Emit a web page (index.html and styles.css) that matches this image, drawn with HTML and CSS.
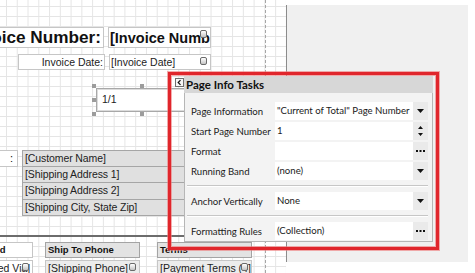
FILE: index.html
```html
<!DOCTYPE html>
<html lang="en">
<head>
    <meta charset="UTF-8">
    <title>Report Designer - Page Info Tasks</title>
    <link rel="stylesheet" href="styles.css">
</head>
<body>
    <div class="workspace">
        <div class="surface">
            <div class="margin-line"></div>

            <div class="ctl title-label">Invoice Number:</div>
            <div class="ctl title-field">[Invoice Number]<span class="tag"></span></div>
            <div class="ctl date-label">Invoice Date:</div>
            <div class="ctl date-field">[Invoice Date]<span class="tag"></span></div>

            <div class="page-info">
                <div class="page-box">1/1</div>
                <span class="grip g-tl"></span>
                <span class="grip g-tc"></span>
                <span class="grip g-tr"></span>
                <span class="grip g-ml"></span>
                <span class="grip g-mr"></span>
                <span class="grip g-bl"></span>
                <span class="grip g-bc"></span>
                <span class="grip g-br"></span>
            </div>

            <div class="ctl ship-label">:</div>
            <div class="address">
                <div class="address-row">[Customer Name]</div>
                <div class="address-row">[Shipping Address 1]</div>
                <div class="address-row">[Shipping Address 2]</div>
                <div class="address-row">[Shipping City, State Zip]</div>
            </div>

            <div class="band-line"></div>

            <div class="ctl head head-shipped">Shipped</div>
            <div class="ctl head head-phone">Ship To Phone</div>
            <div class="ctl head head-terms">Terms</div>

            <div class="ctl cell cell-shipped">[Shipped Via]<span class="tag"></span></div>
            <div class="ctl cell cell-phone">[Shipping Phone]<span class="tag"></span></div>
            <div class="ctl cell cell-terms">[Payment Terms (4]<span class="tag"></span></div>
        </div>
        <div class="side"></div>
    </div>

    <div class="highlight"></div>
    <div class="collapse-btn">
        <svg width="7" height="7" viewBox="0 0 7 7"><path d="M4.5 1.2L2.2 3.5l2.3 2.3" fill="none" stroke="#111" stroke-width="1.2"/></svg>
    </div>

    <div class="tasks">
        <div class="tasks-head">Page Info Tasks</div>
        <div class="tasks-body">
            <div class="task-group">
                <div class="task-row">
                    <span class="task-label">Page Information</span>
                    <span class="task-value">"Current of Total" Page Number</span>
                    <span class="task-btn"><svg width="7" height="4" viewBox="0 0 7 4"><path d="M0 0h7L3.5 4z"/></svg></span>
                </div>
                <div class="task-row">
                    <span class="task-label">Start Page Number</span>
                    <span class="task-value">1</span>
                    <span class="task-btn"><svg width="5" height="10" viewBox="0 0 5 10"><path d="M2.5 0L5 3H0z M0 7h5L2.5 10z"/></svg></span>
                </div>
                <div class="task-row">
                    <span class="task-label">Format</span>
                    <span class="task-value"></span>
                    <span class="task-btn"><svg width="9" height="2" viewBox="0 0 9 2"><rect x="0" width="2" height="2"/><rect x="3.5" width="2" height="2"/><rect x="7" width="2" height="2"/></svg></span>
                </div>
                <div class="task-row">
                    <span class="task-label">Running Band</span>
                    <span class="task-value">(none)</span>
                    <span class="task-btn"><svg width="7" height="4" viewBox="0 0 7 4"><path d="M0 0h7L3.5 4z"/></svg></span>
                </div>
            </div>
            <div class="task-divider"></div>
            <div class="task-group">
                <div class="task-row">
                    <span class="task-label">Anchor Vertically</span>
                    <span class="task-value">None</span>
                    <span class="task-btn"><svg width="7" height="4" viewBox="0 0 7 4"><path d="M0 0h7L3.5 4z"/></svg></span>
                </div>
            </div>
            <div class="task-divider"></div>
            <div class="task-group">
                <div class="task-row">
                    <span class="task-label">Formatting Rules</span>
                    <span class="task-value">(Collection)</span>
                    <span class="task-btn"><svg width="9" height="2" viewBox="0 0 9 2"><rect x="0" width="2" height="2"/><rect x="3.5" width="2" height="2"/><rect x="7" width="2" height="2"/></svg></span>
                </div>
            </div>
        </div>
    </div>
</body>
</html>
```

FILE: styles.css
```css
body {
    margin: 0;
    position: relative;
    width: 475px;
    height: 273px;
    overflow: hidden;
    background-color: #fff;
    font-family: "Liberation Sans", Arial, sans-serif;
}
.workspace {
    display: flex;
    height: 273px;
}
.surface {
    position: relative;
    flex: none;
    width: 286px;
    overflow: hidden;
    background-color: #fff;
    background-image:
        linear-gradient(to right, #e5e5e5 1px, transparent 1px),
        linear-gradient(to bottom, #e5e5e5 1px, transparent 1px);
    background-size: 10.78px 10px;
    background-position: 6px 6px;
}
.side {
    width: 181px;
    height: 257px;
    margin-top: 5px;
    background-color: #f0f0f0;
    border-left: 1px solid #8c8c8c;
}
.margin-line {
    position: absolute;
    left: 265px;
    top: 0;
    bottom: 0;
    border-left: 1px dashed #a6a6a6;
}

/* report controls on the design surface */
.ctl {
    position: absolute;
    box-sizing: border-box;
    border: 1px solid #c6c6c6;
    background-color: #fff;
    white-space: nowrap;
    overflow: hidden;
    color: #111;
}
.tag {
    position: absolute;
    right: 3px;
    top: 2px;
    width: 5px;
    height: 6px;
    border: 1px solid #6a6a6a;
    border-radius: 2px;
    background: linear-gradient(#fff, #c4c4c4);
}
.title-label {
    left: -60px;
    top: 27px;
    width: 164px;
    height: 21px;
    padding-right: 2px;
    font-size: 17.2px;
    font-weight: bold;
    line-height: 19px;
    text-align: right;
}
.title-field {
    left: 108px;
    top: 27px;
    width: 103px;
    height: 21px;
    padding-left: 1px;
    font-size: 14.5px;
    font-weight: bold;
    line-height: 21px;
}
.date-label {
    left: 18px;
    top: 54px;
    width: 87px;
    height: 16px;
    padding-right: 1px;
    font-size: 10.5px;
    line-height: 14px;
    text-align: right;
    color: #222;
}
.date-field {
    left: 109px;
    top: 54px;
    width: 102px;
    height: 16px;
    padding-left: 1px;
    font-size: 10.5px;
    line-height: 14px;
    color: #222;
}
.page-info {
    position: absolute;
    left: 94px;
    top: 86px;
    width: 96px;
    height: 28px;
}
.page-box {
    box-sizing: border-box;
    height: 24px;
    margin: 2px 0 0 2px;
    padding: 4px 0 0 5px;
    border: 1px solid #a8a8a8;
    box-shadow: inset 0 0 0 1px #dcdcdc;
    background-color: #fff;
    font-size: 10.5px;
    color: #222;
}
.grip {
    position: absolute;
    width: 4px;
    height: 4px;
    background-color: #9c9c9c;
}
.g-tl { left: -2px; top: -2px; }
.g-tc { left: 46px; top: -2px; }
.g-tr { left: 94px; top: -2px; }
.g-ml { left: -2px; top: 12px; }
.g-mr { left: 94px; top: 12px; }
.g-bl { left: -2px; top: 26px; }
.g-bc { left: 46px; top: 26px; }
.g-br { left: 94px; top: 26px; }
.ship-label {
    left: -40px;
    top: 150px;
    width: 58px;
    height: 17px;
    padding-right: 4px;
    font-size: 11px;
    line-height: 15px;
    text-align: right;
}
.address {
    position: absolute;
    left: 22px;
    top: 150px;
    width: 240px;
}
.address-row {
    box-sizing: border-box;
    height: 16.5px;
    padding-left: 2px;
    border: 1px solid #a6a6a6;
    border-top: none;
    background-color: #e0e0e0;
    font-size: 10.5px;
    line-height: 15px;
    letter-spacing: -0.1px;
    color: #222;
    white-space: nowrap;
}
.address-row:first-child {
    border-top: 1px solid #a6a6a6;
}
.band-line {
    position: absolute;
    left: 0;
    right: 0;
    top: 235px;
    height: 2px;
    background-color: #6c6c6c;
}
.head {
    top: 242px;
    height: 16px;
    padding-left: 2px;
    font-size: 9.5px;
    font-weight: bold;
    line-height: 14px;
}
.head-shipped { left: -35px; width: 68px; }
.head-phone { left: 45px; width: 95px; background-color: #e3e3e3; border-color: #a4a4a4; }
.head-terms { left: 157px; width: 95px; background-color: #e3e3e3; border-color: #a4a4a4; }
.cell {
    top: 260px;
    height: 16px;
    padding-left: 2px;
    font-size: 10.5px;
    line-height: 14px;
    color: #222;
}
.cell-shipped { left: -35px; width: 68px; }
.cell-phone { left: 45px; width: 95px; background-color: #ececec; }
.cell-terms { left: 157px; width: 95px; background-color: #ececec; }

/* smart tag panel */
.highlight {
    position: absolute;
    left: 168px;
    top: 72px;
    width: 271px;
    height: 178px;
    box-sizing: border-box;
    border: 3px solid #e0262c;
    box-shadow: 0 0 0 1px rgba(238, 120, 120, 0.6), inset 0 0 0 1px rgba(238, 120, 120, 0.6);
}
.collapse-btn {
    position: absolute;
    left: 175px;
    top: 78px;
    width: 9px;
    height: 9px;
    box-sizing: border-box;
    border: 1px solid #6e6e6e;
    background-color: #f7f7f7;
    display: flex;
    align-items: center;
    justify-content: center;
}
.tasks {
    position: absolute;
    left: 184px;
    top: 76px;
    width: 249px;
    font-family: Lato, "Liberation Sans", sans-serif;
    font-size: 9.6px;
    color: #1b1b1b;
}
.tasks-head {
    height: 17px;
    padding-left: 2px;
    background-color: #d7d7d7;
    font-size: 11.5px;
    font-weight: bold;
    line-height: 17px;
    color: #111;
}
.tasks-body {
    box-sizing: border-box;
    padding: 9px 4px 1px 5px;
    background-color: #f3f3f3;
    border: 1px solid #b6b6b6;
    border-top: none;
}
.task-group {
    display: flex;
    flex-direction: column;
    gap: 2px;
}
.task-row {
    display: grid;
    grid-template-columns: 85px 138px 15px;
    height: 18px;
    align-items: center;
}
.task-label {
    padding-left: 1px;
    white-space: nowrap;
}
.task-value {
    height: 18px;
    padding-left: 2px;
    background-color: #fff;
    line-height: 18px;
    white-space: nowrap;
    overflow: hidden;
}
.task-btn {
    height: 18px;
    background-color: #eaeaea;
    display: flex;
    align-items: center;
    justify-content: center;
}
.task-btn svg {
    fill: #111;
}
.task-divider {
    height: 1px;
    margin: 5px 0 5px -3px;
    background-color: #c6c6c6;
    border-bottom: 1px solid #fff;
}
```
